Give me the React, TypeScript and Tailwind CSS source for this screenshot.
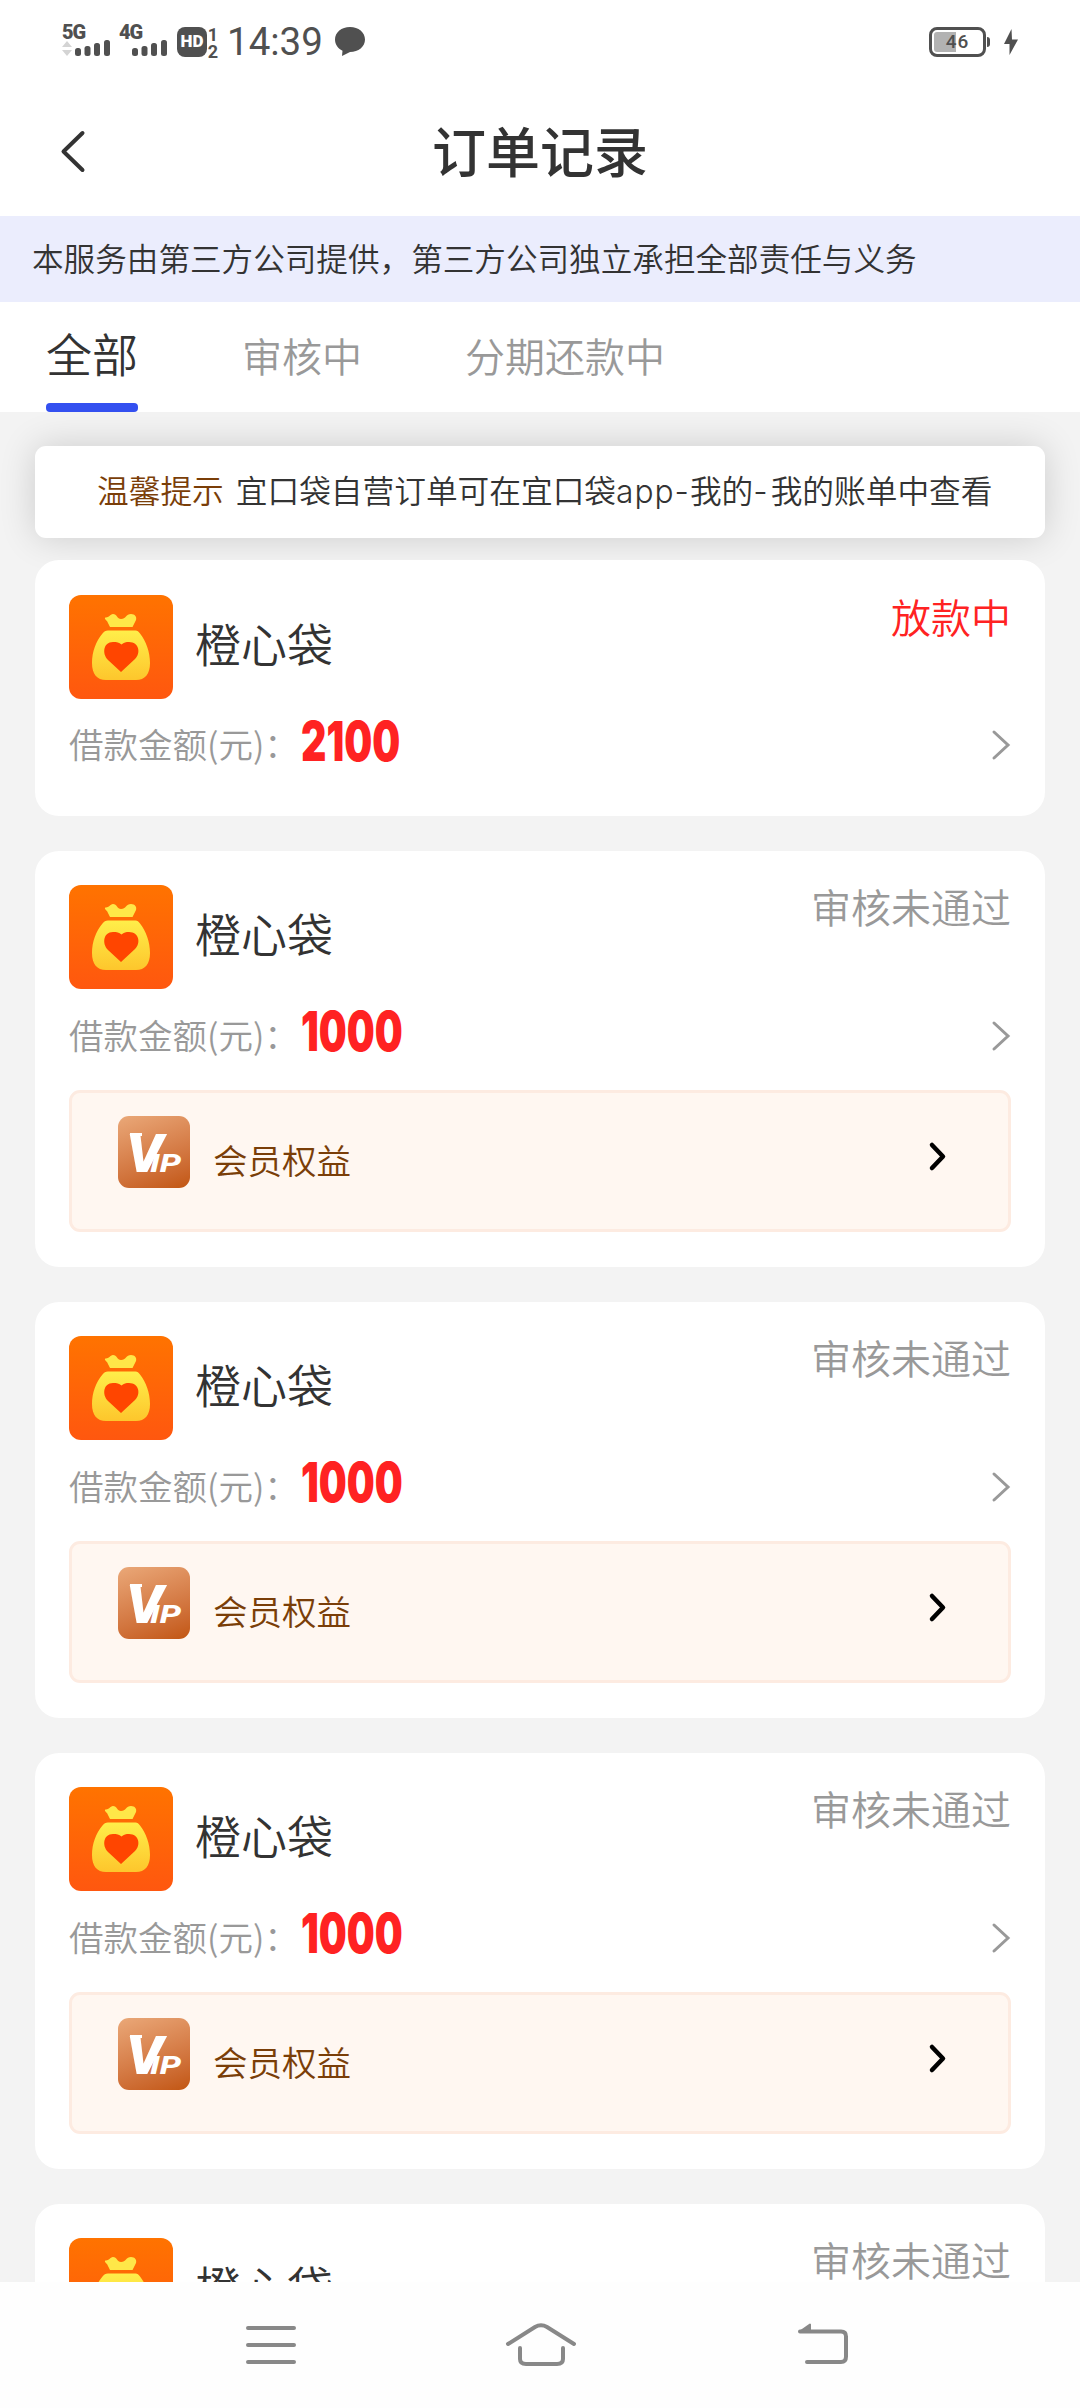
import React from 'react';

interface Order {
  name: string;
  amount: string;
  status: string;
  active?: boolean;
  vip?: boolean;
}

const orders: Order[] = [
  { name: '橙心袋', amount: '2100', status: '放款中', active: true },
  { name: '橙心袋', amount: '1000', status: '审核未通过', vip: true },
  { name: '橙心袋', amount: '1000', status: '审核未通过', vip: true },
  { name: '橙心袋', amount: '1000', status: '审核未通过', vip: true },
  { name: '橙心袋', amount: '1000', status: '审核未通过', vip: true },
];

const SignalBars = () => (
  <svg width="35" height="16" viewBox="0 0 35 16" fill="#505050">
    <rect x="0" y="8" width="6" height="8" rx="2.5" />
    <rect x="9.5" y="6" width="6" height="10" rx="2.5" />
    <rect x="19" y="3" width="6" height="13" rx="2.5" />
    <rect x="29" y="0" width="6" height="16" rx="2.5" />
  </svg>
);

const StatusBar = () => (
  <div className="flex h-[84px] items-start pt-[25px] pl-[62px] font-['Roboto',sans-serif] text-[#505050]">
    <div className="w-[57px]">
      <div className="text-[20px] leading-[15px] font-black tracking-[-1px]">5G</div>
      <div className="flex items-end">
        <svg width="13" height="16" viewBox="0 0 13 16" fill="#d4d4d4">
          <path d="M5 1l5 6H0zM5 16l5-6H0z" />
        </svg>
        <SignalBars />
      </div>
    </div>
    <div className="w-[58px]">
      <div className="text-[20px] leading-[15px] font-black tracking-[-1px]">4G</div>
      <div className="pl-[13px]">
        <SignalBars />
      </div>
    </div>
    <div className="mt-[2px] flex h-[30px] w-[30px] items-center justify-center rounded-[8px] bg-[#505050] text-[17px] font-black text-white">
      HD
    </div>
    <div className="mt-[1px] w-[12px] text-center text-[18px] leading-[17px] font-bold">
      <div>1</div>
      <div>2</div>
    </div>
    <div className="ml-[8px] w-[96px] text-[38.500px] leading-[34px] font-[450] whitespace-nowrap">14:39</div>
    <svg className="mt-[2px] ml-[12px]" width="30" height="30" viewBox="0 0 30 30" fill="#505050">
      <path d="M15 0C6.500 0 0 5.300 0 12.500c0 4.800 2.800 9 7.500 11.200L7 29l8-4c8.500 0 15-5.300 15-12.500S23.500 0 15 0z" />
    </svg>
    <div className="mt-[2px] ml-auto flex h-[30px] w-[57px] rounded-[8px] border-[3px] border-[#505050] p-[2px]">
      <div className="relative h-full w-full rounded-[3px]">
        <div className="h-full w-[22px] rounded-l-[3px] bg-[#b2b2b2]" />
        <span className="absolute inset-0 flex items-center justify-center text-[19px] font-medium tracking-[1px]">46</span>
      </div>
    </div>
    <div className="mt-[12px] ml-px h-[10px] w-[3px] rounded-r bg-[#505050]" />
    <svg className="mt-[4px] mr-[62px] ml-[14px]" width="14" height="26" viewBox="0 0 14 26" fill="#505050">
      <path d="M7.500 0L0 15h5.500v11L14 10.500H8z" />
    </svg>
  </div>
);

const Header = () => (
  <header className="relative flex h-[132px] items-center justify-center">
    <svg className="absolute top-[45px] left-[59px]" width="28" height="44" viewBox="0 0 28 44" fill="none" stroke="#333" strokeWidth="4" strokeLinecap="round" strokeLinejoin="round">
      <path d="M23.500 4L4.500 22.500l19 18.500" />
    </svg>
    <h1 className="text-[54px] leading-none font-medium text-[#333]">订单记录</h1>
  </header>
);

const Tabs = () => (
  <nav className="flex h-[110px] bg-white text-[40px] text-[#999]">
    <div className="ml-[46px] flex w-[92px] flex-col items-center justify-between pt-[21px] text-[46px] text-[#333]">
      <span className="leading-[58px] whitespace-nowrap">全部</span>
      <span className="h-[9px] w-[92px] rounded-[4px] bg-[#3450f0]" />
    </div>
    <span className="ml-[104px] leading-[107px]">审核中</span>
    <span className="ml-[103px] leading-[107px]">分期还款中</span>
  </nav>
);

// 钱袋图标
const BagLogo = () => (
  <svg className="shrink-0" width="104" height="104" viewBox="0 0 104 104">
    <defs>
      <linearGradient id="bagBg" x1="0" y1="0" x2="0" y2="1">
        <stop offset="0" stopColor="#ff7300" />
        <stop offset="1" stopColor="#ff570f" />
      </linearGradient>
      <linearGradient id="bagFill" x1="0" y1="0" x2="0" y2="1">
        <stop offset="0" stopColor="#ffee4a" />
        <stop offset="1" stopColor="#fdc62c" />
      </linearGradient>
    </defs>
    <rect width="104" height="104" rx="12" fill="url(#bagBg)" />
    <path d="M37 22.500c3 0 4-3 7-3.500 4 0 4 5 8 5 5 0 5-5 10-5 4 0 6 3 5 6l-3.500 7H41l-3-6c-2-1.500-3-3.500-1-3.500z" fill="#ffe748" />
    <path d="M39 35.500h27.500c2 0 3 1 4.500 3C77 46 81 57 81 68c0 11-5 17-14 17H37c-9 0-14-6-14-17 0-11 4-22 10.500-29.500 1.500-2 3-3 5.500-3z" fill="url(#bagFill)" />
    <path d="M52 77L39 65C33 59 34 47 44 47c4 0 6 .5 8.500 2.500C55 47.500 57 47 60 47c10 0 12 11 6 17z" fill="#ff4500" />
  </svg>
);

const VipLogo = () => (
  <div className="h-[72px] w-[72px] shrink-0 overflow-hidden rounded-[11px] bg-linear-160 from-[#eaa878] to-[#c2560f]">
    <svg className="font-['Roboto',sans-serif] font-black italic" width="72" height="72" viewBox="0 0 72 72" fill="#fff">
      <text x="8" y="56" fontSize="54" textLength="37" lengthAdjust="spacingAndGlyphs">V</text>
      <text x="32" y="56" fontSize="26" fontWeight="800" textLength="31" lengthAdjust="spacingAndGlyphs">IP</text>
      <path d="M12 17h12v3H12z" />
    </svg>
  </div>
);

const OrderCard = ({ order }: { order: Order }) => (
  <div className="mb-[34.600px] rounded-[24px] bg-white px-[34px] pt-[34.600px] pb-[34.700px]">
    <div className="flex">
      <BagLogo />
      <span className="mt-[15px] ml-[22px] text-[46px] leading-[65px] text-[#333]">{order.name}</span>
      <span className={`ml-auto text-[40px] leading-[43px] ${order.active ? 'text-[#f22]' : 'text-[#999]'}`}>
        {order.status}
      </span>
    </div>
    <div className="flex h-[83px] items-center">
      <span className="mt-[8px] w-[232px] text-[34.500px] whitespace-nowrap text-[#999]">借款金额(元)：</span>
      <span className="mt-[2px] origin-left scale-x-[0.715] font-['Inter',sans-serif] text-[55px] leading-none font-black text-[#f22]">
        {order.amount}
      </span>
      <svg className="mt-[10px] ml-auto" width="20" height="32" viewBox="0 0 20 32" fill="none" stroke="#999" strokeWidth="3" strokeLinecap="round">
        <path d="M3 3l14 13L3 29" />
      </svg>
    </div>
    {order.vip && (
      <div className="mt-[18px] flex h-[142px] rounded-[11px] border-[3px] border-[#fdebe1] bg-[#fff7f1] pt-[23px] pr-[60px] pl-[46px]">
        <VipLogo />
        <span className="mt-[18px] ml-[23px] text-[34.500px] leading-[50px] text-[#7a3e08]">会员权益</span>
        <svg className="mt-[24px] ml-auto" width="20" height="32" viewBox="0 0 20 32" fill="none" stroke="#000" strokeWidth="4.500" strokeLinecap="round" strokeLinejoin="round">
          <path d="M4 5l11 11.500L4 28" />
        </svg>
      </div>
    )}
  </div>
);

const BottomNav = () => (
  <div className="flex h-[126px] bg-[#fefefe] pt-[36px]">
    <svg className="ml-[241px]" width="60" height="56" viewBox="0 0 60 56" fill="none" stroke="#888" strokeWidth="4" strokeLinecap="round">
      <path d="M7 10h46M7 27h46M7 44h46" />
    </svg>
    <svg className="ml-[200px]" width="80" height="56" viewBox="0 0 80 56" fill="none" stroke="#888" strokeWidth="4" strokeLinecap="round">
      <path d="M7 26L34 9q6-3.500 12 0l27 17M19 30v11q0 5 6 5h31q6 0 6-5V30" />
    </svg>
    <svg className="ml-[213px]" width="60" height="56" viewBox="0 0 60 56" fill="none" stroke="#888" strokeWidth="4" strokeLinecap="round" strokeLinejoin="round">
      <path d="M6 13.500h41q5 0 5 5v20q0 5.500-5 5.500H13" />
      <path d="M6 13.500l10-7v7z" fill="#888" strokeWidth="2" />
    </svg>
  </div>
);

export default function App() {
  return (
    <div className="flex h-[2408px] w-[1080px] flex-col overflow-hidden bg-white font-['Noto_Sans_CJK_SC',sans-serif] font-[350]">
      <StatusBar />
      <Header />
      <div className="h-[86px] bg-[#ebedfd] pl-[32px] text-[31.600px] leading-[83px] text-[#333]">
        本服务由第三方公司提供，第三方公司独立承担全部责任与义务
      </div>
      <Tabs />
      <main className="min-h-0 flex-1 overflow-hidden bg-[#f3f3f3] px-[35px] pt-[34px]">
        <div className="mb-[22px] flex h-[92px] items-center rounded-[11px] bg-white pb-[1px] pl-[62px] font-['Inter','Noto_Sans_CJK_SC',sans-serif] text-[31.700px] whitespace-nowrap text-[#333] shadow-[0_0_36px_rgba(0,0,0,0.16)]">
          <span className="mr-[12px] text-[#7a3e08]">温馨提示</span>
          <span>
            宜口袋自营订单可在宜口袋<span className="tracking-[1px]">app-</span>我的<span className="tracking-[3px]">-</span>我的账单中查看
          </span>
        </div>
        {orders.map((order, idx) => (
          <OrderCard key={idx} order={order} />
        ))}
      </main>
      <BottomNav />
    </div>
  );
}
